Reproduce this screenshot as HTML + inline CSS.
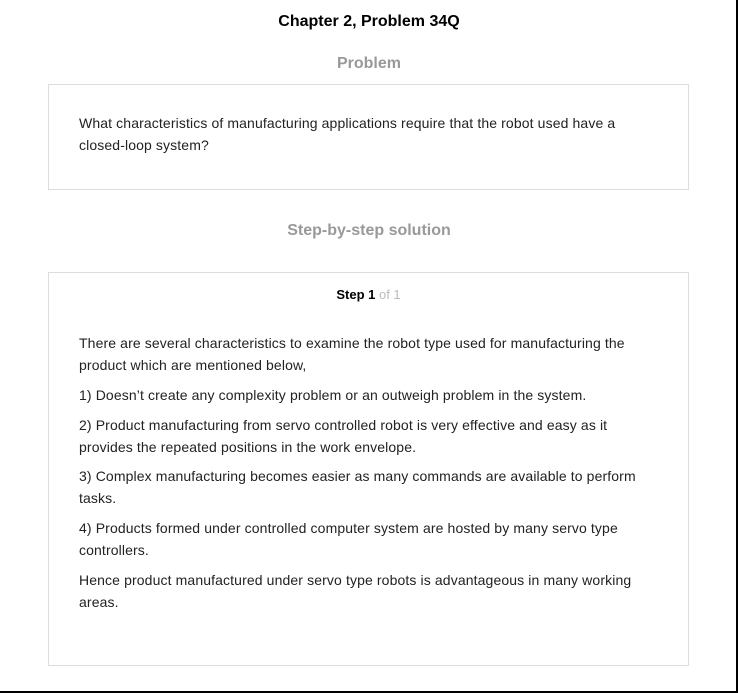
<!DOCTYPE html>
<html><head><style>
body{margin:0;width:738px;height:693px;position:relative;background:#fff;font-family:"Liberation Sans",Arial,sans-serif;color:#222;overflow:hidden}
.frame{position:absolute;left:0;top:0;width:736px;height:691px;border-right:2px solid #000;border-bottom:2px solid #000}
.t{position:absolute;left:0;width:738px;text-align:center;font-weight:bold}
.box{position:absolute;left:48px;width:641px;border:1px solid #ddd;box-sizing:border-box}
p{margin:0;font-size:14px;line-height:22px;position:absolute;left:30px;width:570px;letter-spacing:0.12px}
</style></head><body>
<div class="frame"></div>
<div class="t" style="top:13px;font-size:16px;color:#000">Chapter 2, Problem 34Q</div>
<div class="t" style="top:55px;font-size:16px;color:#999">Problem</div>
<div class="box" style="top:84px;height:106px">
<p style="top:27px">What characteristics of manufacturing applications require that the robot used have a closed-loop system?</p>
</div>
<div class="t" style="top:222px;font-size:16px;color:#999">Step-by-step solution</div>
<div class="box" style="top:272px;height:394px">
<div style="position:absolute;top:14px;left:0;width:100%;text-align:center;font-size:13px;font-weight:bold;color:#000">Step 1 <span style="font-weight:normal;color:#bbb">of 1</span></div>
<p style="top:59px">There are several characteristics to examine the robot type used for manufacturing the product which are mentioned below,</p>
<p style="top:111px">1) Doesn’t create any complexity problem or an outweigh problem in the system.</p>
<p style="top:141px">2) Product manufacturing from servo controlled robot is very effective and easy as it provides the repeated positions in the work envelope.</p>
<p style="top:192px">3) Complex manufacturing becomes easier as many commands are available to perform tasks.</p>
<p style="top:244px">4) Products formed under controlled computer system are hosted by many servo type controllers.</p>
<p style="top:296px">Hence product manufactured under servo type robots is advantageous in many working areas.</p>
</div>
</body></html>
